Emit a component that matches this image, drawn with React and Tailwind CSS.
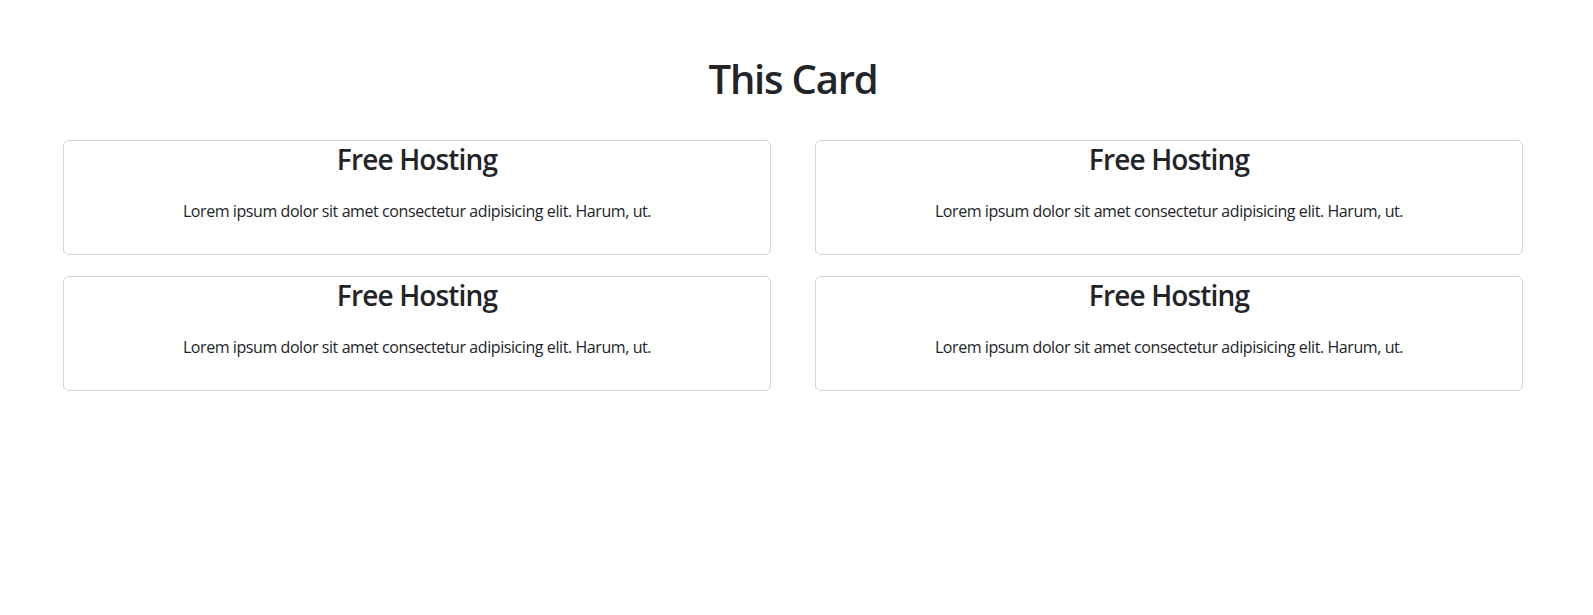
import React from "react";

const cards = [1, 2, 3, 4];

const App = () => {
  return (
    <div className="min-h-screen bg-white text-[#212529] font-['Open_Sans',sans-serif]">
      <div className="pl-[63px] pr-[70px] pt-[55px]">
        <h1 className="text-center text-[40px] leading-[48px] font-semibold tracking-[-1.2px] mb-[37px]">This Card</h1>
        <div className="grid grid-cols-2 gap-x-[44px] gap-y-[21px]">
          {cards.map((c) => (
            <div
              key={c}
              className="h-[115px] border border-[#d3d4d5] rounded-[6px] text-center"
            >
              <h3 className="text-[28px] leading-[34px] font-semibold tracking-[-0.85px] mt-[1px]">Free Hosting</h3>
              <p className="mt-[23px] text-[16px] leading-[24px] tracking-[-0.42px]">
                Lorem ipsum dolor sit amet consectetur adipisicing elit. Harum, ut.
              </p>
            </div>
          ))}
        </div>
      </div>
    </div>
  );
};

export default App;
